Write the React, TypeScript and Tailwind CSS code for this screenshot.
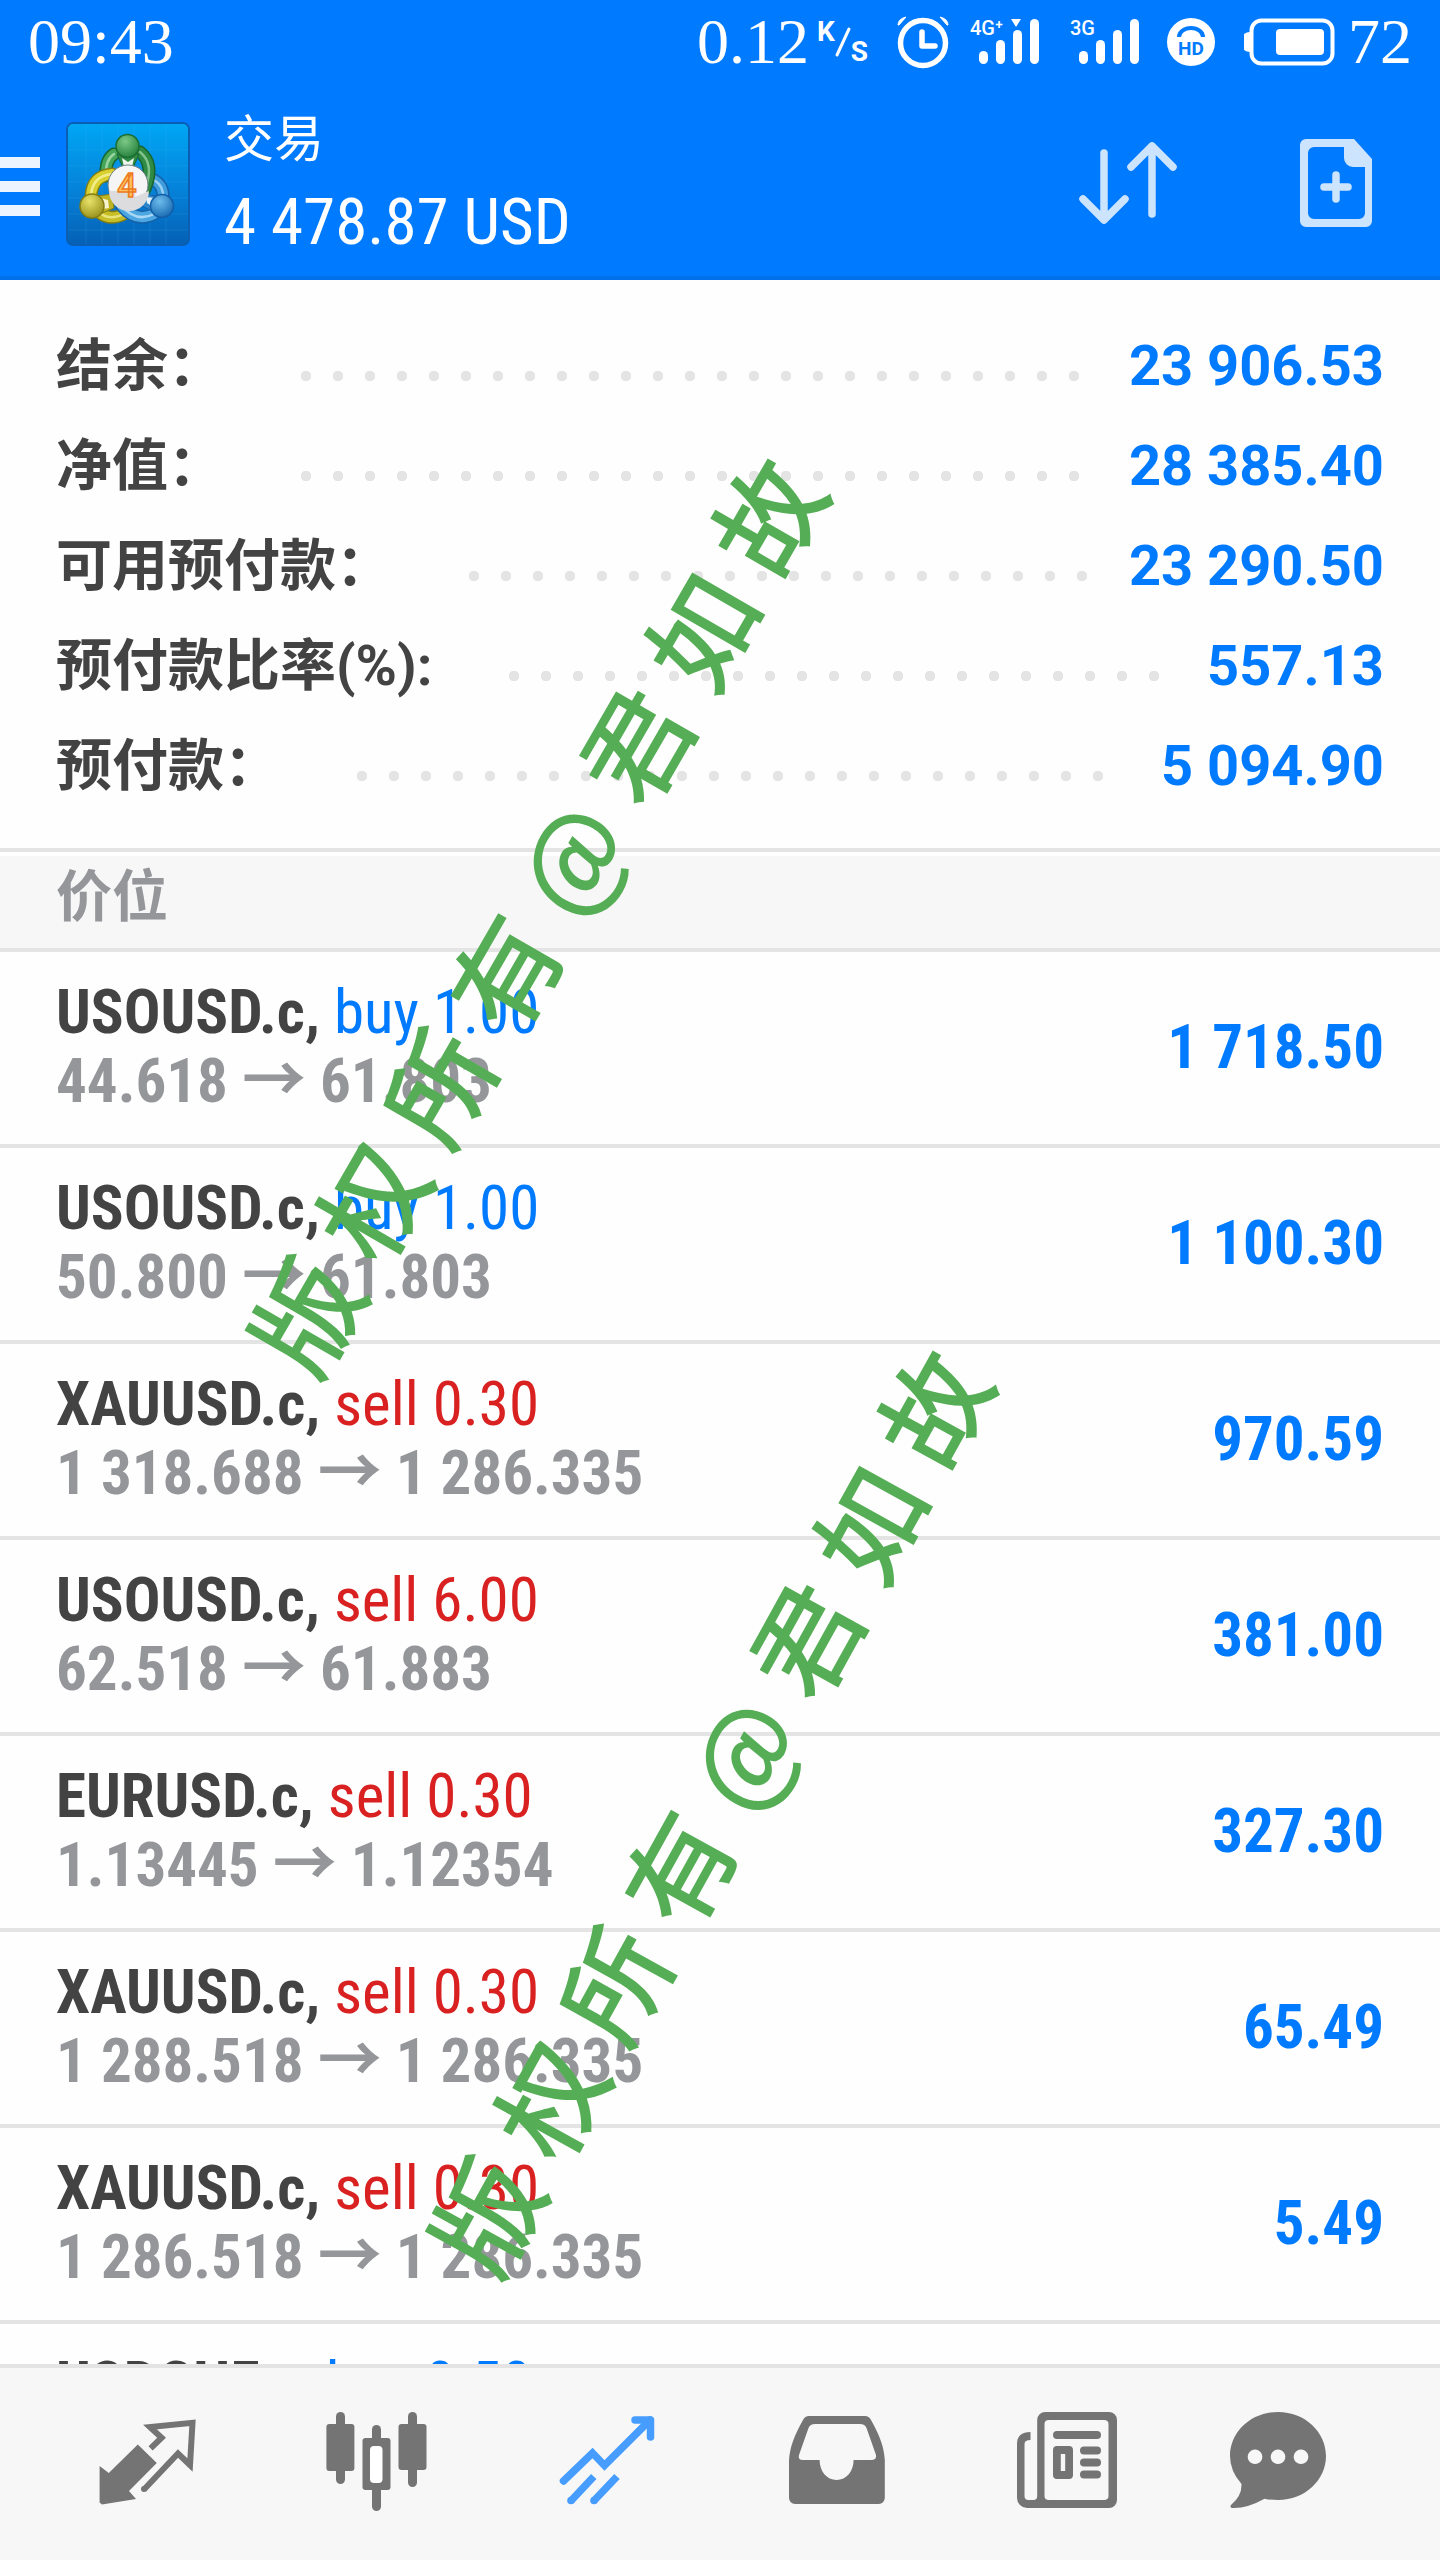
import type { ReactNode } from 'react'

interface Position {
  symbol: string
  side: 'buy' | 'sell'
  lots: string
  open: string
  current: string
  profit: string
}

const summary = [
  { label: '结余：', value: '23 906.53' },
  { label: '净值：', value: '28 385.40' },
  { label: '可用预付款：', value: '23 290.50' },
  { label: '预付款比率(%):', value: '557.13' },
  { label: '预付款：', value: '5 094.90' },
]

const positions: Position[] = [
  { symbol: 'USOUSD.c', side: 'buy', lots: '1.00', open: '44.618', current: '61.803', profit: '1 718.50' },
  { symbol: 'USOUSD.c', side: 'buy', lots: '1.00', open: '50.800', current: '61.803', profit: '1 100.30' },
  { symbol: 'XAUUSD.c', side: 'sell', lots: '0.30', open: '1 318.688', current: '1 286.335', profit: '970.59' },
  { symbol: 'USOUSD.c', side: 'sell', lots: '6.00', open: '62.518', current: '61.883', profit: '381.00' },
  { symbol: 'EURUSD.c', side: 'sell', lots: '0.30', open: '1.13445', current: '1.12354', profit: '327.30' },
  { symbol: 'XAUUSD.c', side: 'sell', lots: '0.30', open: '1 288.518', current: '1 286.335', profit: '65.49' },
  { symbol: 'XAUUSD.c', side: 'sell', lots: '0.30', open: '1 286.518', current: '1 286.335', profit: '5.49' },
]

function SignalIcon({ label, active }: { label: string; active?: boolean }) {
  return (
    <svg width="72" height="48" viewBox="0 0 72 48" className="overflow-visible fill-white">
      <text x="0" y="17" fontSize="20" fontWeight="500" fontFamily="Roboto, sans-serif">
        {label}
      </text>
      {active && <path d="M41 1h10l-5 8z" />}
      <rect x="9" y="33" width="9" height="13" rx="4.5" />
      <rect x="26" y="22" width="9" height="24" rx="4.5" />
      <rect x="43" y="12" width="9" height="34" rx="4.5" />
      <rect x="60" y="1" width="9" height="45" rx="4.5" />
    </svg>
  )
}

function StatusBar() {
  return (
    <div className="flex h-[84px] items-center justify-between px-7 font-['Liberation_Serif',serif] text-[64px] leading-none text-white">
      <span>09:43</span>
      <div className="flex items-center">
        <span>0.12</span>
        <span className="ml-2 flex items-center font-['Roboto',sans-serif] text-[28px] font-bold leading-none">
          <span className="pb-5">K</span>
          <svg width="16" height="32" viewBox="0 0 16 32" fill="none" stroke="currentColor" strokeWidth="3" strokeLinecap="round">
            <path d="M14 3L2 29" />
          </svg>
          <span className="pt-5">S</span>
        </span>
        <svg width="54" height="54" viewBox="0 0 54 54" fill="none" stroke="currentColor" className="ml-7">
          <circle cx="27" cy="28" r="22.5" strokeWidth="5.5" />
          <path d="M26 17v14h13" strokeWidth="5.5" strokeLinecap="round" strokeLinejoin="round" />
          <path d="M2 10q0-6 8-8L3 10zM52 10q0-6-8-8l7 8z" fill="currentColor" strokeWidth="1" />
        </svg>
        <div className="ml-5 flex gap-7">
          <SignalIcon label="4G⁺" active />
          <SignalIcon label="3G" />
        </div>
        <svg width="50" height="50" viewBox="0 0 50 50" className="ml-6">
          <circle cx="25" cy="25" r="24" fill="#fff" />
          <path d="M13 20a12 9 0 0 1 24 0" fill="none" stroke="#007aff" strokeWidth="4" />
          <text x="25" y="38" fontSize="19" fontWeight="700" textAnchor="middle" fill="#007aff" fontFamily="Roboto, sans-serif">
            HD
          </text>
        </svg>
        <svg width="92" height="48" viewBox="0 0 92 48" className="ml-7">
          <path d="M6 14a10 10 0 0 0 0 20z" fill="#fff" />
          <rect x="7.500" y="2.500" width="81" height="43" rx="10" fill="none" stroke="#fff" strokeWidth="4" />
          <rect x="32" y="11" width="48" height="26" rx="4" fill="#fff" />
        </svg>
        <span className="ml-3">72</span>
      </div>
    </div>
  )
}

// One glossy arm of the logo: dark rim, body, thin highlight
function Arm({ d, rim, body, shine }: { d: string; rim: string; body: string; shine: string }) {
  return (
    <g fill="none" strokeLinecap="round">
      <path d={d} stroke={rim} strokeWidth="13" />
      <path d={d} stroke={body} strokeWidth="10" />
      <path d={d} stroke={shine} strokeWidth="2.500" strokeOpacity="0.7" />
    </g>
  )
}

function AppLogo() {
  return (
    <svg width="124" height="124" viewBox="6 8 124 124" className="shrink-0">
      <defs>
        <linearGradient id="tile" x1="0" y1="0" x2="0" y2="1">
          <stop offset="0" stopColor="#00a6f4" />
          <stop offset="0.55" stopColor="#0582d9" />
          <stop offset="1" stopColor="#0460b4" />
        </linearGradient>
        <radialGradient id="green" cx="0.4" cy="0.3" r="0.8">
          <stop offset="0" stopColor="#7cc887" />
          <stop offset="1" stopColor="#1c7a35" />
        </radialGradient>
        <radialGradient id="yellow" cx="0.4" cy="0.3" r="0.8">
          <stop offset="0" stopColor="#e9e26a" />
          <stop offset="1" stopColor="#8f8a14" />
        </radialGradient>
        <radialGradient id="sky" cx="0.4" cy="0.3" r="0.8">
          <stop offset="0" stopColor="#6dbcec" />
          <stop offset="1" stopColor="#1062ac" />
        </radialGradient>
      </defs>
      <rect x="7" y="9" width="122" height="122" rx="6" fill="url(#tile)" stroke="#0a5fb5" strokeWidth="2" />
      <path d="M26 10v120M42 10v120M58 10v120M74 10v120M90 10v120M106 10v120M8 36h120M8 52h120M8 68h120M8 84h120M8 100h120M8 116h120" stroke="#5cc4ff" strokeOpacity="0.14" />
      <Arm d="M94 66Q104 72 103 84" rim="#1560a6" body="#3f9ddd" shine="#bfe5fb" />
      <Arm d="M54 40Q45 46 46 62" rim="#17652e" body="#45a558" shine="#bfe8c4" />
      <Arm d="M80 38Q95 50 85 75" rim="#17652e" body="#2f8a43" shine="#a5dbac" />
      <Arm d="M52 60Q32 62 31 82" rim="#857d12" body="#d9d02f" shine="#fbf9b4" />
      <Arm d="M40 99Q50 107 64 100" rim="#857d12" body="#c7bd27" shine="#f7f3a0" />
      <Arm d="M62 92Q76 109 94 100" rim="#1560a6" body="#4ba6e2" shine="#d2eefc" />
      <path d="M57 40l6 14h10l6-14z" fill="#2f8a43" stroke="#17652e" />
      <path d="M62 44l6 4 6-4-2 9h-8z" fill="#edf6ed" />
      <path d="M38 82l14-2 2 14-14 6z" fill="#bdb324" stroke="#857d12" />
      <path d="M40 84l8 2 1 8-6 1z" fill="#f6f3cf" />
      <path d="M96 82l-12-2-2 12 14 7z" fill="#2d86cb" stroke="#1560a6" />
      <path d="M95 84l-9-1 1 6 6 4z" fill="#e4f3fc" />
      <circle cx="67.500" cy="32" r="11.500" fill="url(#green)" stroke="#1b6d33" strokeWidth="1.500" />
      <circle cx="32" cy="92" r="12" fill="url(#yellow)" stroke="#857d12" strokeWidth="1.500" />
      <circle cx="102" cy="92" r="11.500" fill="url(#sky)" stroke="#125ea8" strokeWidth="1.500" />
      <circle cx="68" cy="71" r="20" fill="#f5f5f5" stroke="#6f7f86" />
      <path d="M49 77h26v6l14-6a20 20 0 0 1-40 0z" fill="#dcdcdf" />
      <text x="67" y="83" fontSize="34" fontWeight="500" textAnchor="middle" fill="#ffc45e" stroke="#ee7a22" strokeWidth="1.500" fontFamily="Roboto, sans-serif">
        4
      </text>
    </svg>
  )
}

function Header() {
  return (
    <header className="border-b-4 border-[#0070ea] bg-[#007aff]">
      <StatusBar />
      <div className="flex items-start pb-4 text-white">
        <button aria-label="Menu" className="mt-[73px] flex w-10 flex-col gap-[13px]">
          <span className="h-[11px] w-full bg-[#ecf5ff]" />
          <span className="h-[11px] w-full bg-[#ecf5ff]" />
          <span className="h-[11px] w-full bg-[#ecf5ff]" />
        </button>
        <div className="ml-[26px] mt-[38px]">
          <AppLogo />
        </div>
        <div className="ml-[34px] mt-4">
          <h1 className="font-['Noto_Sans_CJK_SC',sans-serif] text-[50px] leading-[70px]">交易</h1>
          <p className="mt-[14px] font-['Roboto_Condensed','Liberation_Sans_Narrow',sans-serif] text-[65px] leading-[76px]">4 478.87 USD</p>
        </div>
        <button aria-label="Sort" className="ml-auto mt-[53px]">
          <svg width="104" height="90" viewBox="0 0 104 90" fill="none" stroke="#cde4ff" strokeWidth="7.500" strokeLinecap="round" strokeLinejoin="round">
            <path d="M28 16v64M7 62l21 21 21-21M76 77V9M55 30L76 9l21 21" />
          </svg>
        </button>
        <button aria-label="New order" className="ml-[116px] mr-[64px] mt-[53px]">
          <svg width="80" height="92" viewBox="0 0 80 92" fill="#cde4ff">
            <path
              fillRule="evenodd"
              d="M12 2h46l18 20v62a6 6 0 0 1-6 6H10a6 6 0 0 1-6-6V8a6 6 0 0 1 6-6zM18 10a6 6 0 0 0-6 6v60a6 6 0 0 0 6 6h45a6 6 0 0 0 6-6V30H57a9 9 0 0 1-9-9V10z"
            />
            <path d="M40 38v24M28 50h24" stroke="#cde4ff" strokeWidth="7.500" strokeLinecap="round" />
          </svg>
        </button>
      </div>
    </header>
  )
}

function AccountSummary() {
  return (
    <dl className="px-14 pb-8 pt-9 font-['Roboto','Noto_Sans_CJK_SC',sans-serif] text-[56px] font-bold">
      {summary.map((row) => (
        <div key={row.label} className="flex h-[100px] items-center">
          <dt className="mr-[77px] text-[#434343]">{row.label}</dt>
          <dd className="flex flex-1 items-center text-[#007aff]">
            <span className="mr-10 mt-5 h-[10px] flex-1 bg-[radial-gradient(circle_at_5px_5px,#e4e4e4_5px,transparent_5.5px)] bg-[length:32px_10px] bg-repeat-x" />
            <span>{row.value}</span>
          </dd>
        </div>
      ))}
    </dl>
  )
}

function PositionRow({ position }: { position: Position }) {
  const { symbol, side, lots, open, current, profit } = position
  return (
    <li className="flex items-center justify-between border-b-4 border-[#e4e4e4] px-14 pb-7 pt-[26px] text-[61px] font-bold">
      <div className="leading-[69px]">
        <p className="text-[#434343]">
          {symbol},{' '}
          <span className={side === 'buy' ? 'font-normal text-[#007aff]' : 'font-normal text-[#d92121]'}>
            {side} {lots}
          </span>
        </p>
        <p className="text-[#95969a]">
          {open} <span className="font-['Noto_Sans_CJK_SC',sans-serif] text-[64px] leading-[0px]">→</span> {current}
        </p>
      </div>
      <span className="leading-[69px] text-[#007aff]">{profit}</span>
    </li>
  )
}

// Diagonal copyright mark, read upwards from the lower left
function Watermark({ className }: { className: string }) {
  return (
    <div aria-hidden="true" className="pointer-events-none">
      <span
        className={`absolute -translate-x-1/2 -translate-y-1/2 whitespace-nowrap font-['Noto_Sans_CJK_SC',sans-serif] text-[108px] font-medium leading-none text-[#55ae55] ${className}`}
      >
        版 权 所 有 @ 君 如 故
      </span>
    </div>
  )
}

function NavButton({ label, active, children }: { label: string; active?: boolean; children: ReactNode }) {
  return (
    <button aria-label={label} className={`flex justify-center ${active ? 'text-[#469dff]' : 'text-[#747474]'}`}>
      <svg width="104" height="104" viewBox="0 0 104 104" fill="currentColor">
        {children}
      </svg>
    </button>
  )
}

function BottomNav() {
  return (
    <nav className="grid h-[196px] shrink-0 grid-cols-[repeat(5,230fr)_192fr] border-t-4 border-[#e4e4e4] bg-[#f7f7f7] pl-8 pr-[66px] pt-[42px]">
      <NavButton label="行情">
        <path d="M4.600 56l9.200 7 29-28.500 19 18.500L34 81l7 8-34 5.500-2.400-2z" />
        <path d="M55.600 38.300l11-10.600L55 17l42.500-4.200L95 55 83 43.500l-34 36" fill="none" stroke="currentColor" strokeWidth="6" />
        <circle cx="49" cy="79" r="3" />
      </NavButton>
      <NavButton label="图表">
        <rect x="1.400" y="14" width="28" height="47" rx="3" />
        <rect x="11" y="2" width="9" height="72" rx="4.500" />
        <rect x="73.500" y="14" width="28" height="46" rx="3" />
        <rect x="83" y="2" width="9" height="75" rx="4.500" />
        <rect x="47" y="15" width="9" height="86" rx="4.500" />
        <rect x="37.500" y="28" width="28" height="52" rx="3" />
        <rect x="45" y="36" width="12.500" height="37" rx="4" fill="#fff" />
      </NavButton>
      <NavButton label="交易" active>
        <g fill="none" stroke="currentColor" strokeWidth="7.500">
          <path d="M8.500 71l29-28 12 12.500L95 10" strokeLinecap="round" />
          <path d="M80 10h15.500v17" strokeLinecap="round" strokeLinejoin="round" />
          <path d="M15.800 91l23-24.500M38.700 91L62 66.500" />
        </g>
        <circle cx="16" cy="90.500" r="3.800" />
        <circle cx="39" cy="90.500" r="3.800" />
      </NavButton>
      <NavButton label="历史">
        <path
          fillRule="evenodd"
          d="M24 6h56q4 0 6 4c9 16 13 27 13.800 40v38a6 6 0 0 1-6 6H10a6 6 0 0 1-6-6V50c1-13 5-24 14-40q2-4 6-4zM30 14q-5 0-6.500 4L14 45q-1.500 5 4 5h16.600c0 11 7 20 17 20s17-9 17-20H86q6 0 5-5l-9.500-27q-1.500-4-6.500-4z"
        />
      </NavButton>
      <NavButton label="新闻">
        <path
          fillRule="evenodd"
          d="M30 2h64a8 8 0 0 1 8 8v80a8 8 0 0 1-8 8H12A10 10 0 0 1 2 88V34Q2 22 15.500 22v8q-6 0-6 4v52q0 4 4 4h5q3.700 0 3.700-4V10a8 8 0 0 1 8-8zM34 10q-4.500 0-4.500 4v72q0 4 4.500 4h55q4.500 0 4.500-4V14q0-4-4.500-4z"
        />
        <rect x="38" y="21" width="48" height="8" rx="4" />
        <path fillRule="evenodd" d="M42 36h12a4 4 0 0 1 4 4v25a4 4 0 0 1-4 4H42a4 4 0 0 1-4-4V40a4 4 0 0 1 4-4zm3.800 8v17h4.400V44z" />
        <rect x="65" y="36.500" width="21" height="8" rx="4" />
        <rect x="65" y="48.500" width="21" height="8" rx="4" />
        <rect x="65" y="60.500" width="21" height="8" rx="4" />
      </NavButton>
      <NavButton label="信箱">
        <path
          fillRule="evenodd"
          d="M52 2c27 0 48 20 48 44S79 90 52 90q-8 0-13.500-1.300Q22 98 8 98q-5 0-3-3 11-9 10.500-21Q4 61 4 46C4 22 25 2 52 2zM29 39.500a7.300 7.300 0 1 0 .01 0zM52 39.500a7.300 7.300 0 1 0 .01 0zM75 39.500a7.300 7.300 0 1 0 .01 0z"
        />
      </NavButton>
    </nav>
  )
}

export default function App() {
  return (
    <div className="relative flex h-screen w-full flex-col overflow-hidden bg-[#fefefe] font-['Roboto_Condensed','Liberation_Sans_Narrow',sans-serif]">
      <Header />
      <main className="min-h-0 flex-1 overflow-hidden">
        <AccountSummary />
        <h2 className="border-y-4 border-[#e4e4e4] bg-[#f7f7f7] px-14 pb-4 font-['Noto_Sans_CJK_SC',sans-serif] text-[56px] font-bold leading-[80px] text-[#95969a] shadow-[inset_0_4px_0_#fefefe]">
          价位
        </h2>
        <ul>
          {positions.map((position, i) => (
            <PositionRow key={i} position={position} />
          ))}
          <PositionRow
            position={{ symbol: 'USDCHF.c', side: 'buy', lots: '0.50', open: '0.99873', current: '1.00125', profit: '0.00' }}
          />
        </ul>
      </main>
      <BottomNav />
      <Watermark className="left-[37%] top-[914px] -rotate-[60deg]" />
      <Watermark className="left-[49%] top-[1810px] -rotate-[61deg]" />
    </div>
  )
}
